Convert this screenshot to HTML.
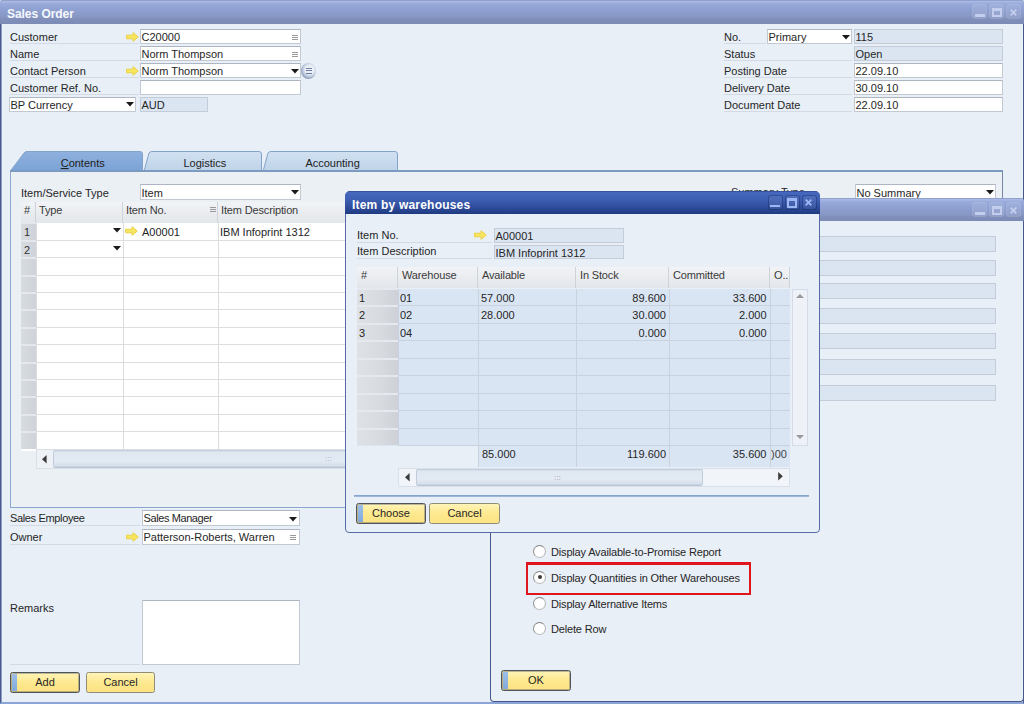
<!DOCTYPE html><html><head><meta charset="utf-8"><title>Sales Order</title><style>
*{box-sizing:border-box;margin:0;padding:0}
html,body{width:1024px;height:704px;overflow:hidden}
body{position:relative;background:#eef2f8;font:11px "Liberation Sans",sans-serif;color:#262626}
.a{position:absolute}
.t{position:absolute;white-space:nowrap;line-height:14px;height:14px}
.lbl{position:absolute;white-space:nowrap;line-height:16px;height:15px;border-bottom:1px solid #d3dae6}
.in{position:absolute;background:#fff;border:1px solid #c3c9d3;border-top-color:#aeb5c2;height:15px;line-height:15px;padding-left:.5px;white-space:nowrap;overflow:hidden}
.dis{background:#dbe5f2;border-color:#c3ccd8}
.r{text-align:right;padding-right:3px}
.dd{position:absolute;width:0;height:0;border-left:3.5px solid transparent;border-right:3.5px solid transparent;border-top:4.5px solid #1c1c1c}
.btn{position:absolute;height:21px;border:1px solid #8f8c78;border-radius:2.5px;background:linear-gradient(#fff4b8,#fde98f 50%,#fce283);text-align:center;line-height:19px}
.btn.def{border:1px solid #4e535c;box-shadow:inset 0 0 0 1px rgba(78,83,92,.38);line-height:19px}
.btn.def:before{content:"";position:absolute;left:1px;top:1px;bottom:1px;width:5px;background:linear-gradient(#9dbfe9,#82aadc)}
.hdr{position:absolute;background:linear-gradient(#f1f3f6,#e3e6ea);border-right:1px solid #cfd3d9;color:#3a3a3a;line-height:17px;padding-left:3px;letter-spacing:-.15px;white-space:nowrap;overflow:hidden}
.wb{position:absolute;width:13px;height:13px}
</style></head><body>
<div class="a" style="left:0;top:0;width:1024px;height:704px;background:#e8eff7;border-left:1px solid #46588c;border-right:1px solid #46588c;border-bottom:2px solid #8ba5d6;box-shadow:inset 1px 0 0 #8f9dc4;border-radius:3px 3px 0 0"></div>
<div class="a" style="left:0;top:0;width:1024px;height:24px;border-radius:3px 3px 0 0;background:linear-gradient(#8696bf 0,#a9b9e6 1.5px,#97a9d9 4px,#8fa1d2 9px,#8999c8 15px,#8695c2 17.5px,#8090bb 18.5px,#7c8bb6 100%)"></div>
<div class="t" style="left:7px;top:7px;color:#f6f8fc;font-weight:bold;font-size:12px;letter-spacing:-.05px">Sales Order</div>
<div class="a" style="left:973.0px;top:5.0px;width:13px;height:13px;background:rgba(255,255,255,.10);box-shadow:0 0 0 1px rgba(255,255,255,.16);border-radius:2px"><div style="position:absolute;left:1.5px;width:10px;top:9px;height:2.7px;background:#c3cdee"></div></div><div class="a" style="left:990.0px;top:5.0px;width:13px;height:13px;background:rgba(255,255,255,.10);box-shadow:0 0 0 1px rgba(255,255,255,.16);border-radius:2px"><div style="position:absolute;left:1.5px;width:10px;top:2.5px;height:9.5px;border:2px solid #c3cdee;border-top-width:3px"></div></div><div class="a" style="left:1007.0px;top:5.0px;width:13px;height:13px;background:rgba(255,255,255,.10);box-shadow:0 0 0 1px rgba(255,255,255,.16);border-radius:2px"><svg width="14" height="14" viewBox="0 0 14 14" style="position:absolute;left:-.5px;top:-.5px"><path d="M3.7 4.7l5.6 5.6M9.3 4.7l-5.6 5.6" stroke="#c3cdee" stroke-width="1.9"/></svg></div>
<div class="lbl" style="left:10px;top:29px;width:129px">Customer</div>
<div class="lbl" style="left:10px;top:46px;width:129px">Name</div>
<div class="lbl" style="left:10px;top:63px;width:129px">Contact Person</div>
<div class="lbl" style="left:10px;top:80px;width:129px">Customer Ref. No.</div>
<div class="in" style="left:140px;top:29px;width:161px">C20000</div><div class="a" style="left:292px;top:35px;width:6px;height:5px;border-top:1px solid #999;border-bottom:1px solid #999"><div style="margin-top:1px;height:1px;background:#999"></div></div>
<div class="in" style="left:140px;top:46px;width:161px">Norm Thompson</div><div class="a" style="left:292px;top:52px;width:6px;height:5px;border-top:1px solid #999;border-bottom:1px solid #999"><div style="margin-top:1px;height:1px;background:#999"></div></div>
<div class="in" style="left:140px;top:63px;width:161px">Norm Thompson</div><svg class="a" style="left:290.5px;top:69px" width="8" height="5" viewBox="0 0 8 5"><path d="M0 0h8L4 4.6z" fill="#1a1a1a"/></svg>
<div class="in" style="left:140px;top:80px;width:161px"></div>
<svg class="a" style="left:126px;top:32px" width="13" height="10" viewBox="0 0 13 10"><path d="M0.5 3.2h6.5V0.6l5.3 4.4-5.3 4.4V6.8H0.5z" fill="#f8e55e" stroke="#ead24a" stroke-width="1" stroke-linejoin="round"/></svg><svg class="a" style="left:126px;top:66px" width="13" height="10" viewBox="0 0 13 10"><path d="M0.5 3.2h6.5V0.6l5.3 4.4-5.3 4.4V6.8H0.5z" fill="#f8e55e" stroke="#ead24a" stroke-width="1" stroke-linejoin="round"/></svg>
<div class="a" style="left:300.5px;top:63px;width:15.5px;height:15.5px;border-radius:50%;background:radial-gradient(circle at 58% 42%,#f7f9fc 0,#e3e9f3 38%,#a9b7cf 62%,#6a7da3 85%,#55678f 100%)"><div style="position:absolute;left:5px;top:4.5px;width:6px;height:6px;border-top:1.2px solid #6b7c9c;border-bottom:1.2px solid #6b7c9c"><div style="margin-top:1.2px;height:1.2px;background:#6b7c9c"></div></div></div>
<div class="in" style="left:9px;top:97px;width:127px">BP Currency</div><svg class="a" style="left:125.5px;top:101.5px" width="8" height="5" viewBox="0 0 8 5"><path d="M0 0h8L4 4.6z" fill="#1a1a1a"/></svg>
<div class="in dis" style="left:140px;top:97px;width:68px">AUD</div>
<div class="lbl" style="left:724px;top:29px;width:42px">No.</div>
<div class="lbl" style="left:724px;top:46px;width:128px">Status</div>
<div class="lbl" style="left:724px;top:63px;width:128px">Posting Date</div>
<div class="lbl" style="left:724px;top:80px;width:128px">Delivery Date</div>
<div class="lbl" style="left:724px;top:97px;width:128px">Document Date</div>
<div class="in" style="left:767px;top:29px;width:85px">Primary</div><svg class="a" style="left:841.5px;top:35px" width="8" height="5" viewBox="0 0 8 5"><path d="M0 0h8L4 4.6z" fill="#1a1a1a"/></svg>
<div class="in dis" style="left:854px;top:29px;width:149px">115</div>
<div class="in dis" style="left:854px;top:46px;width:149px">Open</div>
<div class="in" style="left:854px;top:63px;width:149px">22.09.10</div>
<div class="in" style="left:854px;top:80px;width:149px">30.09.10</div>
<div class="in" style="left:854px;top:97px;width:149px">22.09.10</div>
<svg class="a" style="left:10px;top:151px" width="133" height="21" viewBox="0 0 133 21"><defs><linearGradient id="g10" x1="0" y1="0" x2="0" y2="1"><stop offset="0" stop-color="#8eb0de"/><stop offset="1" stop-color="#7ba3d6"/></linearGradient></defs><path d="M0 20.5L14 2Q15 0.5 17 0.5H130Q132.5 0.5 132.5 3V20.5z" fill="url(#g10)" stroke="#84a3cb" stroke-width="1"/><text x="72.7" y="16" text-anchor="middle" font-family="Liberation Sans, sans-serif" font-size="11" fill="#222"><tspan text-decoration="underline">C</tspan>ontents</text></svg>
<svg class="a" style="left:144px;top:151px" width="118" height="21" viewBox="0 0 118 21"><defs><linearGradient id="g144" x1="0" y1="0" x2="0" y2="1"><stop offset="0" stop-color="#d2e1f1"/><stop offset="1" stop-color="#bdd2e9"/></linearGradient></defs><path d="M0 20.5L5 2Q6 0.5 8 0.5H115Q117.5 0.5 117.5 3V20.5z" fill="url(#g144)" stroke="#84a3cb" stroke-width="1"/><text x="60.80000000000001" y="16" text-anchor="middle" font-family="Liberation Sans, sans-serif" font-size="11" fill="#222">Logistics</text></svg>
<svg class="a" style="left:263px;top:151px" width="135" height="21" viewBox="0 0 135 21"><defs><linearGradient id="g263" x1="0" y1="0" x2="0" y2="1"><stop offset="0" stop-color="#d2e1f1"/><stop offset="1" stop-color="#bdd2e9"/></linearGradient></defs><path d="M0 20.5L5 2Q6 0.5 8 0.5H132Q134.5 0.5 134.5 3V20.5z" fill="url(#g263)" stroke="#84a3cb" stroke-width="1"/><text x="69.60000000000002" y="16" text-anchor="middle" font-family="Liberation Sans, sans-serif" font-size="11" fill="#222">Accounting</text></svg>
<div class="a" style="left:10px;top:170px;width:993px;height:338px;border:1px solid #8aa8cd;border-right-color:#7688a6;border-top:2px solid #7c9bc0;background:#ebf0f5"></div>
<div class="t" style="left:21px;top:186px">Item/Service Type</div>
<div class="in" style="left:140px;top:184px;width:161px;height:16px;line-height:16px">Item</div><svg class="a" style="left:291px;top:189.5px" width="8" height="5" viewBox="0 0 8 5"><path d="M0 0h8L4 4.6z" fill="#1a1a1a"/></svg>
<div class="in" style="left:855px;top:184px;width:141px;height:16px;line-height:16px">No Summary</div><svg class="a" style="left:986px;top:190px" width="8" height="5" viewBox="0 0 8 5"><path d="M0 0h8L4 4.6z" fill="#1a1a1a"/></svg>
<div class="t" style="left:731px;top:185px">Summary Type</div>
<div class="a" style="left:21px;top:202px;width:700px;height:249px;background:#fff"></div>
<div class="hdr" style="left:21px;top:202px;width:15px;height:21px">#</div>
<div class="hdr" style="left:36px;top:202px;width:87px;height:21px">Type</div>
<div class="hdr" style="left:123px;top:202px;width:95px;height:21px">Item No.</div>
<div class="hdr" style="left:218px;top:202px;width:482px;height:21px">Item Description</div>
<div class="a" style="left:209.5px;top:207px;width:6px;height:5px;border-top:1px solid #999;border-bottom:1px solid #999"><div style="margin-top:1px;height:1px;background:#999"></div></div>
<div class="a" style="left:36px;top:240px;width:685px;height:1px;background:#dcdedf"></div>
<div class="a" style="left:21px;top:222px;width:15px;height:18px;background:#e4e8ed"></div>
<div class="a" style="left:21px;top:223.5px;width:15px;height:16px;background:linear-gradient(90deg,#d8dce1,#ced3d9)"></div>
<div class="a" style="left:36px;top:257px;width:685px;height:1px;background:#dcdedf"></div>
<div class="a" style="left:21px;top:240px;width:15px;height:17px;background:#e4e8ed"></div>
<div class="a" style="left:21px;top:241.5px;width:15px;height:15px;background:linear-gradient(90deg,#d8dce1,#ced3d9)"></div>
<div class="a" style="left:36px;top:275px;width:685px;height:1px;background:#dcdedf"></div>
<div class="a" style="left:21px;top:257px;width:15px;height:18px;background:#e4e8ed"></div>
<div class="a" style="left:21px;top:258.5px;width:15px;height:16px;background:linear-gradient(90deg,#d8dce1,#ced3d9)"></div>
<div class="a" style="left:36px;top:292px;width:685px;height:1px;background:#dcdedf"></div>
<div class="a" style="left:21px;top:275px;width:15px;height:17px;background:#e4e8ed"></div>
<div class="a" style="left:21px;top:276.5px;width:15px;height:15px;background:linear-gradient(90deg,#d8dce1,#ced3d9)"></div>
<div class="a" style="left:36px;top:309px;width:685px;height:1px;background:#dcdedf"></div>
<div class="a" style="left:21px;top:292px;width:15px;height:17px;background:#e4e8ed"></div>
<div class="a" style="left:21px;top:293.5px;width:15px;height:15px;background:linear-gradient(90deg,#d8dce1,#ced3d9)"></div>
<div class="a" style="left:36px;top:327px;width:685px;height:1px;background:#dcdedf"></div>
<div class="a" style="left:21px;top:309px;width:15px;height:18px;background:#e4e8ed"></div>
<div class="a" style="left:21px;top:310.5px;width:15px;height:16px;background:linear-gradient(90deg,#d8dce1,#ced3d9)"></div>
<div class="a" style="left:36px;top:344px;width:685px;height:1px;background:#dcdedf"></div>
<div class="a" style="left:21px;top:327px;width:15px;height:17px;background:#e4e8ed"></div>
<div class="a" style="left:21px;top:328.5px;width:15px;height:15px;background:linear-gradient(90deg,#d8dce1,#ced3d9)"></div>
<div class="a" style="left:36px;top:362px;width:685px;height:1px;background:#dcdedf"></div>
<div class="a" style="left:21px;top:344px;width:15px;height:18px;background:#e4e8ed"></div>
<div class="a" style="left:21px;top:345.5px;width:15px;height:16px;background:linear-gradient(90deg,#d8dce1,#ced3d9)"></div>
<div class="a" style="left:36px;top:379px;width:685px;height:1px;background:#dcdedf"></div>
<div class="a" style="left:21px;top:362px;width:15px;height:17px;background:#e4e8ed"></div>
<div class="a" style="left:21px;top:363.5px;width:15px;height:15px;background:linear-gradient(90deg,#d8dce1,#ced3d9)"></div>
<div class="a" style="left:36px;top:396px;width:685px;height:1px;background:#dcdedf"></div>
<div class="a" style="left:21px;top:379px;width:15px;height:17px;background:#e4e8ed"></div>
<div class="a" style="left:21px;top:380.5px;width:15px;height:15px;background:linear-gradient(90deg,#d8dce1,#ced3d9)"></div>
<div class="a" style="left:36px;top:414px;width:685px;height:1px;background:#dcdedf"></div>
<div class="a" style="left:21px;top:396px;width:15px;height:18px;background:#e4e8ed"></div>
<div class="a" style="left:21px;top:397.5px;width:15px;height:16px;background:linear-gradient(90deg,#d8dce1,#ced3d9)"></div>
<div class="a" style="left:36px;top:431px;width:685px;height:1px;background:#dcdedf"></div>
<div class="a" style="left:21px;top:414px;width:15px;height:17px;background:#e4e8ed"></div>
<div class="a" style="left:21px;top:415.5px;width:15px;height:15px;background:linear-gradient(90deg,#d8dce1,#ced3d9)"></div>
<div class="a" style="left:36px;top:449px;width:685px;height:1px;background:#dcdedf"></div>
<div class="a" style="left:21px;top:431px;width:15px;height:18px;background:#e4e8ed"></div>
<div class="a" style="left:21px;top:432.5px;width:15px;height:16px;background:linear-gradient(90deg,#d8dce1,#ced3d9)"></div>
<div class="a" style="left:36px;top:223px;width:1px;height:227px;background:#dcdcdc"></div>
<div class="a" style="left:123px;top:223px;width:1px;height:227px;background:#dcdcdc"></div>
<div class="a" style="left:218px;top:223px;width:1px;height:227px;background:#dcdcdc"></div>
<div class="t" style="left:24px;top:225px;color:#333">1</div><div class="t" style="left:24px;top:242.5px;color:#333">2</div>
<svg class="a" style="left:113px;top:228.3px" width="8" height="5" viewBox="0 0 8 5"><path d="M0 0h8L4 4.6z" fill="#1a1a1a"/></svg><svg class="a" style="left:113px;top:245.7px" width="8" height="5" viewBox="0 0 8 5"><path d="M0 0h8L4 4.6z" fill="#1a1a1a"/></svg>
<svg class="a" style="left:125px;top:226px" width="13" height="10" viewBox="0 0 13 10"><path d="M0.5 3.2h6.5V0.6l5.3 4.4-5.3 4.4V6.8H0.5z" fill="#f8e55e" stroke="#ead24a" stroke-width="1" stroke-linejoin="round"/></svg>
<div class="t" style="left:142px;top:225px">A00001</div><div class="t" style="left:220px;top:225px">IBM Infoprint 1312</div>
<div class="a" style="left:36px;top:450px;width:680px;height:19px;background:#eef2f7;border:1px solid #d9e0ea;border-top:0"></div>
<div class="a" style="left:53px;top:450px;width:640px;height:18px;background:linear-gradient(#b9c7d8 0,#dfe7f1 2px,#e3eaf3 60%,#d5dfeb 88%,#aebdcf 100%);border-left:1px solid #c0ccdb;border-right:1px solid #c0ccdb;border-radius:2px"></div>
<svg class="a" style="left:41.5px;top:454.5px" width="5" height="9" viewBox="0 0 5 9"><path d="M4.6 0v8.4L0 4.2z" fill="#3c3c3c"/></svg>
<div class="t" style="left:325px;top:452px;color:#aab;font-size:8px">:::</div>
<div class="lbl" style="left:10px;top:510px;width:130px;height:16px;letter-spacing:-.35px">Sales Employee</div>
<div class="lbl" style="left:10px;top:529px;width:130px;height:16px;line-height:16px">Owner</div>
<div class="in" style="left:142px;top:510px;width:158px;height:16px;line-height:15px;letter-spacing:-.4px">Sales Manager</div><svg class="a" style="left:288.5px;top:516.5px" width="8" height="5" viewBox="0 0 8 5"><path d="M0 0h8L4 4.6z" fill="#1a1a1a"/></svg>
<div class="in" style="left:142px;top:529px;width:158px;height:16px;line-height:15px">Patterson-Roberts, Warren</div><div class="a" style="left:290px;top:535px;width:6px;height:5px;border-top:1px solid #999;border-bottom:1px solid #999"><div style="margin-top:1px;height:1px;background:#999"></div></div>
<svg class="a" style="left:126px;top:532px" width="13" height="10" viewBox="0 0 13 10"><path d="M0.5 3.2h6.5V0.6l5.3 4.4-5.3 4.4V6.8H0.5z" fill="#f8e55e" stroke="#ead24a" stroke-width="1" stroke-linejoin="round"/></svg>
<div class="t" style="left:10px;top:601px">Remarks</div>
<div class="a" style="left:10px;top:664px;width:130px;height:1px;background:#d3dae6"></div>
<div class="in" style="left:142px;top:600px;width:158px;height:65px"></div>
<div class="btn def" style="left:10px;top:672px;width:70px">Add</div>
<div class="btn" style="left:86px;top:672px;width:69px">Cancel</div>
<div class="a" style="left:490px;top:198px;width:534px;height:504px;background:#e9eff7;border:1px solid #46588c;border-top:0;border-radius:4px 4px 4px 4px"></div>
<div class="a" style="left:490px;top:198px;width:534px;height:23px;border-radius:4px 4px 0 0;background:linear-gradient(#8696bf 0,#a9b9e6 1.5px,#97a9d9 4px,#8fa1d2 9px,#8999c8 15px,#8695c2 17.5px,#8090bb 18.5px,#7c8bb6 100%)"></div>
<div class="a" style="left:973.0px;top:203.0px;width:13px;height:13px;background:rgba(255,255,255,.10);box-shadow:0 0 0 1px rgba(255,255,255,.16);border-radius:2px"><div style="position:absolute;left:1.5px;width:10px;top:9px;height:2.7px;background:#c3cdee"></div></div><div class="a" style="left:990.0px;top:203.0px;width:13px;height:13px;background:rgba(255,255,255,.10);box-shadow:0 0 0 1px rgba(255,255,255,.16);border-radius:2px"><div style="position:absolute;left:1.5px;width:10px;top:2.5px;height:9.5px;border:2px solid #c3cdee;border-top-width:3px"></div></div><div class="a" style="left:1007.0px;top:203.0px;width:13px;height:13px;background:rgba(255,255,255,.10);box-shadow:0 0 0 1px rgba(255,255,255,.16);border-radius:2px"><svg width="14" height="14" viewBox="0 0 14 14" style="position:absolute;left:-.5px;top:-.5px"><path d="M3.7 4.7l5.6 5.6M9.3 4.7l-5.6 5.6" stroke="#c3cdee" stroke-width="1.9"/></svg></div>
<div class="in dis" style="left:700px;top:236px;width:296px;height:16px"></div>
<div class="in dis" style="left:700px;top:260px;width:296px;height:16px"></div>
<div class="in dis" style="left:700px;top:283px;width:296px;height:16px"></div>
<div class="in dis" style="left:700px;top:308px;width:296px;height:16px"></div>
<div class="in dis" style="left:700px;top:333px;width:296px;height:16px"></div>
<div class="in dis" style="left:700px;top:359px;width:296px;height:16px"></div>
<div class="in dis" style="left:700px;top:385px;width:296px;height:16px"></div>
<div class="a" style="left:533.0px;top:544.5px;width:13px;height:13px;border-radius:50%;border:1px solid #9a9a9a;border-top-color:#858585;border-left-color:#8c8c8c;border-bottom-color:#bdbdbd;border-right-color:#b3b3b3;background:radial-gradient(circle at 50% 45%,#fff 55%,#e9ebee)"></div>
<div class="t" style="left:551px;top:544.5px;letter-spacing:-.17px">Display Available-to-Promise Report</div>
<div class="a" style="left:533.0px;top:570.5px;width:13px;height:13px;border-radius:50%;border:1px solid #9a9a9a;border-top-color:#858585;border-left-color:#8c8c8c;border-bottom-color:#bdbdbd;border-right-color:#b3b3b3;background:radial-gradient(circle at 50% 45%,#fff 55%,#e9ebee)"><div style="position:absolute;left:3.5px;top:3.5px;width:4px;height:4px;border-radius:50%;background:#3a3a3a"></div></div>
<div class="t" style="left:551px;top:570.5px;letter-spacing:-.17px">Display Quantities in Other Warehouses</div>
<div class="a" style="left:533.0px;top:596.5px;width:13px;height:13px;border-radius:50%;border:1px solid #9a9a9a;border-top-color:#858585;border-left-color:#8c8c8c;border-bottom-color:#bdbdbd;border-right-color:#b3b3b3;background:radial-gradient(circle at 50% 45%,#fff 55%,#e9ebee)"></div>
<div class="t" style="left:551px;top:596.5px;letter-spacing:-.17px">Display Alternative Items</div>
<div class="a" style="left:533.0px;top:622.0px;width:13px;height:13px;border-radius:50%;border:1px solid #9a9a9a;border-top-color:#858585;border-left-color:#8c8c8c;border-bottom-color:#bdbdbd;border-right-color:#b3b3b3;background:radial-gradient(circle at 50% 45%,#fff 55%,#e9ebee)"></div>
<div class="t" style="left:551px;top:622.0px;letter-spacing:-.17px">Delete Row</div>
<div class="a" style="left:526px;top:562px;width:225px;height:33px;border:2px solid #e0161e;border-top-width:3px"></div>
<div class="btn def" style="left:501px;top:670px;width:70px">OK</div>
<div class="a" style="left:345px;top:191px;width:475px;height:342px;background:#e8eff7;border:1px solid #566ca8;border-radius:5px 5px 4px 4px;overflow:hidden"></div>
<div class="a" style="left:345px;top:191px;width:475px;height:23px;border-radius:5px 5px 0 0;background:linear-gradient(#2f4a8c 0,#4568be 1.5px,#3c5db0 40%,#2f4d9c 70%,#1f3a80 100%)"></div>
<div class="t" style="left:352px;top:198px;color:#fff;font-weight:bold;font-size:12px;letter-spacing:.2px">Item by warehouses</div>
<div class="a" style="left:768.5px;top:195.7px;width:13px;height:13px;background:rgba(255,255,255,.07);box-shadow:0 0 0 1px rgba(10,20,70,.28);border-radius:2px"><div style="position:absolute;left:1.5px;width:10px;top:9px;height:2.7px;background:#9cb7f3"></div></div><div class="a" style="left:785.5px;top:195.7px;width:13px;height:13px;background:rgba(255,255,255,.07);box-shadow:0 0 0 1px rgba(10,20,70,.28);border-radius:2px"><div style="position:absolute;left:1.5px;width:10px;top:2.5px;height:9.5px;border:2px solid #9cb7f3;border-top-width:3px"></div></div><div class="a" style="left:802.5px;top:195.7px;width:13px;height:13px;background:rgba(255,255,255,.07);box-shadow:0 0 0 1px rgba(10,20,70,.28);border-radius:2px"><svg width="14" height="14" viewBox="0 0 14 14" style="position:absolute;left:-.5px;top:-.5px"><path d="M3.7 4.7l5.6 5.6M9.3 4.7l-5.6 5.6" stroke="#9cb7f3" stroke-width="1.9"/></svg></div>
<div class="lbl" style="left:357px;top:227px;width:135px;height:16px">Item No.</div>
<div class="lbl" style="left:357px;top:244px;width:135px;line-height:15px">Item Description</div>
<svg class="a" style="left:474px;top:230px" width="13" height="10" viewBox="0 0 13 10"><path d="M0.5 3.2h6.5V0.6l5.3 4.4-5.3 4.4V6.8H0.5z" fill="#f8e55e" stroke="#ead24a" stroke-width="1" stroke-linejoin="round"/></svg>
<div class="in dis" style="left:494px;top:228px;width:130px;height:15px;line-height:15px">A00001</div>
<div class="in dis" style="left:494px;top:245px;width:130px;height:14px;line-height:14px">IBM Infoprint 1312</div>
<div class="hdr" style="left:357px;top:267px;width:41px;height:21px;padding-left:4px">#</div>
<div class="hdr" style="left:398px;top:267px;width:80px;height:21px;padding-left:4px">Warehouse</div>
<div class="hdr" style="left:478px;top:267px;width:98px;height:21px;padding-left:4px">Available</div>
<div class="hdr" style="left:576px;top:267px;width:93px;height:21px;padding-left:4px">In Stock</div>
<div class="hdr" style="left:669px;top:267px;width:101px;height:21px;padding-left:4px">Committed</div>
<div class="hdr" style="left:770px;top:267px;width:20px;height:21px;padding-left:4px">O..</div>
<div class="a" style="left:357px;top:289px;width:433px;height:157px;background:#dae5f3"></div>
<div class="a" style="left:478px;top:446px;width:312px;height:21px;background:#dae5f3"></div>
<div class="a" style="left:398px;top:305px;width:392px;height:1px;background:#c9d3e0"></div>
<div class="a" style="left:357px;top:288px;width:41px;height:17px;background:#e5e9ef"></div>
<div class="a" style="left:357px;top:289.5px;width:41px;height:15px;background:linear-gradient(90deg,#dee1e6,#d7dadf 60%,#cdd1d7)"></div>
<div class="a" style="left:398px;top:323px;width:392px;height:1px;background:#c9d3e0"></div>
<div class="a" style="left:357px;top:305px;width:41px;height:18px;background:#e5e9ef"></div>
<div class="a" style="left:357px;top:306.5px;width:41px;height:16px;background:linear-gradient(90deg,#dee1e6,#d7dadf 60%,#cdd1d7)"></div>
<div class="a" style="left:398px;top:340px;width:392px;height:1px;background:#c9d3e0"></div>
<div class="a" style="left:357px;top:323px;width:41px;height:17px;background:#e5e9ef"></div>
<div class="a" style="left:357px;top:324.5px;width:41px;height:15px;background:linear-gradient(90deg,#dee1e6,#d7dadf 60%,#cdd1d7)"></div>
<div class="a" style="left:398px;top:358px;width:392px;height:1px;background:#c9d3e0"></div>
<div class="a" style="left:357px;top:340px;width:41px;height:18px;background:#e5e9ef"></div>
<div class="a" style="left:357px;top:341.5px;width:41px;height:16px;background:linear-gradient(90deg,#dee1e6,#d7dadf 60%,#cdd1d7)"></div>
<div class="a" style="left:398px;top:375px;width:392px;height:1px;background:#c9d3e0"></div>
<div class="a" style="left:357px;top:358px;width:41px;height:17px;background:#e5e9ef"></div>
<div class="a" style="left:357px;top:359.5px;width:41px;height:15px;background:linear-gradient(90deg,#dee1e6,#d7dadf 60%,#cdd1d7)"></div>
<div class="a" style="left:398px;top:393px;width:392px;height:1px;background:#c9d3e0"></div>
<div class="a" style="left:357px;top:375px;width:41px;height:18px;background:#e5e9ef"></div>
<div class="a" style="left:357px;top:376.5px;width:41px;height:16px;background:linear-gradient(90deg,#dee1e6,#d7dadf 60%,#cdd1d7)"></div>
<div class="a" style="left:398px;top:410px;width:392px;height:1px;background:#c9d3e0"></div>
<div class="a" style="left:357px;top:393px;width:41px;height:17px;background:#e5e9ef"></div>
<div class="a" style="left:357px;top:394.5px;width:41px;height:15px;background:linear-gradient(90deg,#dee1e6,#d7dadf 60%,#cdd1d7)"></div>
<div class="a" style="left:398px;top:428px;width:392px;height:1px;background:#c9d3e0"></div>
<div class="a" style="left:357px;top:410px;width:41px;height:18px;background:#e5e9ef"></div>
<div class="a" style="left:357px;top:411.5px;width:41px;height:16px;background:linear-gradient(90deg,#dee1e6,#d7dadf 60%,#cdd1d7)"></div>
<div class="a" style="left:398px;top:445px;width:392px;height:1px;background:#c9d3e0"></div>
<div class="a" style="left:357px;top:428px;width:41px;height:17px;background:#e5e9ef"></div>
<div class="a" style="left:357px;top:429.5px;width:41px;height:15px;background:linear-gradient(90deg,#dee1e6,#d7dadf 60%,#cdd1d7)"></div>
<div class="a" style="left:398px;top:289px;width:1px;height:157px;background:#c9d3e0"></div>
<div class="a" style="left:478px;top:289px;width:1px;height:178px;background:#c9d3e0"></div>
<div class="a" style="left:576px;top:289px;width:1px;height:178px;background:#c9d3e0"></div>
<div class="a" style="left:669px;top:289px;width:1px;height:178px;background:#c9d3e0"></div>
<div class="a" style="left:770px;top:289px;width:1px;height:178px;background:#c9d3e0"></div>
<div class="t" style="left:359px;top:291px">1</div><div class="t" style="left:400px;top:291px">01</div><div class="t" style="left:481px;top:291px">57.000</div>
<div class="t" style="left:576px;top:291px;width:90px;text-align:right">89.600</div><div class="t" style="left:669px;top:291px;width:97.5px;text-align:right">33.600</div>
<div class="t" style="left:359px;top:308px">2</div><div class="t" style="left:400px;top:308px">02</div><div class="t" style="left:481px;top:308px">28.000</div>
<div class="t" style="left:576px;top:308px;width:90px;text-align:right">30.000</div><div class="t" style="left:669px;top:308px;width:97.5px;text-align:right">2.000</div>
<div class="t" style="left:359px;top:326px">3</div><div class="t" style="left:400px;top:326px">04</div><div class="t" style="left:481px;top:326px"></div>
<div class="t" style="left:576px;top:326px;width:90px;text-align:right">0.000</div><div class="t" style="left:669px;top:326px;width:97.5px;text-align:right">0.000</div>
<div class="t" style="left:482px;top:447px">85.000</div><div class="t" style="left:576px;top:447px;width:90px;text-align:right">119.600</div><div class="t" style="left:669px;top:447px;width:97.5px;text-align:right">35.600</div><div class="t" style="left:771px;top:447px;color:#444">)00</div>
<div class="a" style="left:792px;top:289px;width:16px;height:157px;background:#eef2f8;border:1px solid #d5dce8"></div>
<div class="a" style="left:796px;top:294px;width:0;height:0;border-left:4px solid transparent;border-right:4px solid transparent;border-bottom:4px solid #999"></div>
<div class="a" style="left:796px;top:435px;width:0;height:0;border-left:4px solid transparent;border-right:4px solid transparent;border-top:4px solid #999"></div>
<div class="a" style="left:398px;top:468px;width:392px;height:19px;background:#f1f4f9;border:1px solid #d9e0ea"></div>
<div class="a" style="left:416px;top:469px;width:287px;height:17px;background:linear-gradient(#b9c7d8 0,#dfe7f1 2px,#e3eaf3 60%,#d5dfeb 88%,#aebdcf 100%);border-left:1px solid #c0ccdb;border-right:1px solid #c0ccdb;border-radius:2px"></div>
<svg class="a" style="left:404.5px;top:472.8px" width="5" height="9" viewBox="0 0 5 9"><path d="M4.6 0v8.6L0 4.3z" fill="#3c3c3c"/></svg>
<svg class="a" style="left:778px;top:472.3px" width="5" height="9" viewBox="0 0 5 9"><path d="M0.2 0v8.6L4.8 4.3z" fill="#3c3c3c"/></svg>
<div class="t" style="left:554px;top:471px;color:#99a;font-size:8px">:::</div>
<div class="a" style="left:354px;top:495px;width:455px;height:2px;background:linear-gradient(#7b9cc9,#a9c0dd)"></div>
<div class="btn def" style="left:356px;top:503px;width:70px">Choose</div>
<div class="btn" style="left:429px;top:503px;width:71px">Cancel</div>
</body></html>
